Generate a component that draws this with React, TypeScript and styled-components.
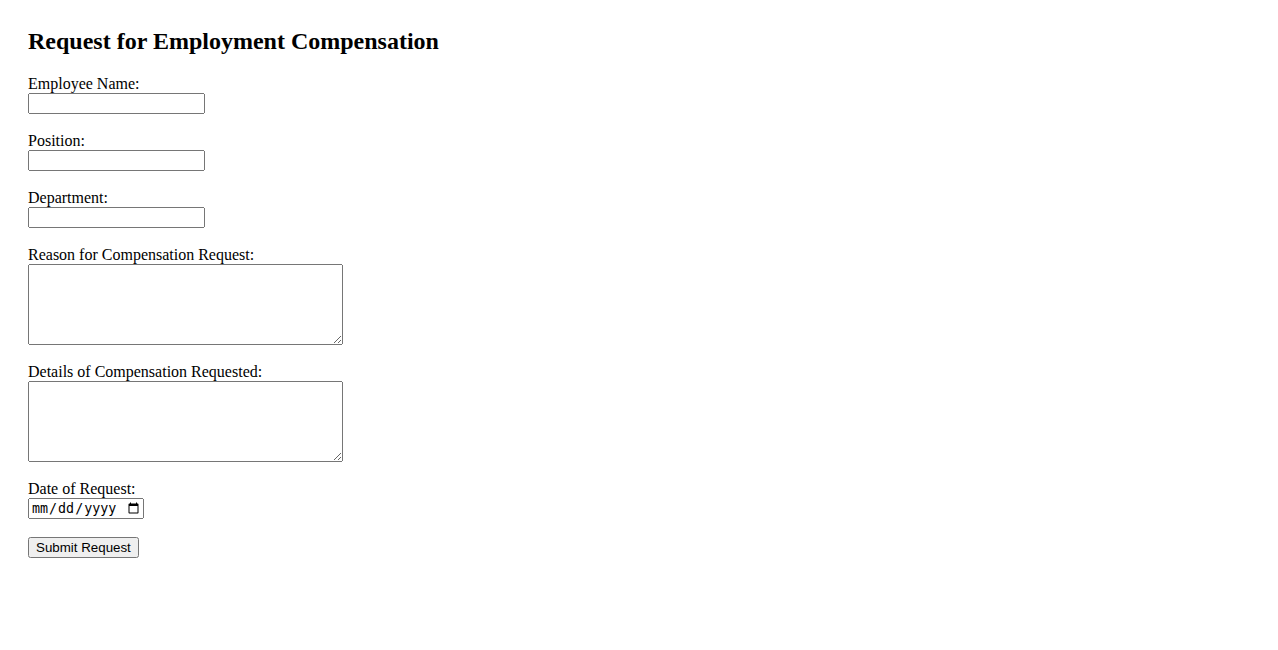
import React from "react";
import styled, { createGlobalStyle } from "styled-components";

const GlobalStyle = createGlobalStyle`
  html, body {
    background: #ffffff;
  }
  body {
    margin: 8px;
    font-family: "Liberation Serif", "Times New Roman", serif;
    font-size: 16px;
    color: #000000;
  }
`;

const Page = styled.div`
  padding: 20px;
`;

const Title = styled.h2`
  margin: 0 0 20px 0;
  font-size: 24px;
  font-weight: bold;
  line-height: normal;
`;

const Form = styled.form`
  display: flex;
  flex-direction: column;
  align-items: flex-start;
`;

const Field = styled.div`
  display: flex;
  flex-direction: column;
  align-items: flex-start;
  margin-bottom: 18px;
`;

const Label = styled.label`
  display: block;
  line-height: 18px;
  height: 18px;
`;

const TextInput = styled.input`
  box-sizing: border-box;
  width: 177px;
  height: 21px;
  margin: 0;
`;

const DateInput = styled.input`
  box-sizing: border-box;
  width: 116px;
  height: 21px;
  margin: 0;
`;

const TextArea = styled.textarea`
  box-sizing: border-box;
  width: 315px;
  height: 81px;
  margin: 0;
`;

const SubmitButton = styled.button`
  box-sizing: border-box;
  height: 21px;
  margin: 0;
  font-family: "Liberation Sans", Arial, sans-serif;
  font-size: 13.333px;
`;

export default function App() {
  return (
    <>
      <GlobalStyle />
      <Page>
        <Title>Request for Employment Compensation</Title>
        <Form onSubmit={(e) => e.preventDefault()}>
          <Field>
            <Label htmlFor="name">Employee Name:</Label>
            <TextInput id="name" type="text" />
          </Field>
          <Field>
            <Label htmlFor="position">Position:</Label>
            <TextInput id="position" type="text" />
          </Field>
          <Field>
            <Label htmlFor="department">Department:</Label>
            <TextInput id="department" type="text" />
          </Field>
          <Field>
            <Label htmlFor="reason">Reason for Compensation Request:</Label>
            <TextArea id="reason" />
          </Field>
          <Field>
            <Label htmlFor="details">Details of Compensation Requested:</Label>
            <TextArea id="details" />
          </Field>
          <Field>
            <Label htmlFor="date">Date of Request:</Label>
            <DateInput id="date" type="date" />
          </Field>
          <SubmitButton type="submit">Submit Request</SubmitButton>
        </Form>
      </Page>
    </>
  );
}
